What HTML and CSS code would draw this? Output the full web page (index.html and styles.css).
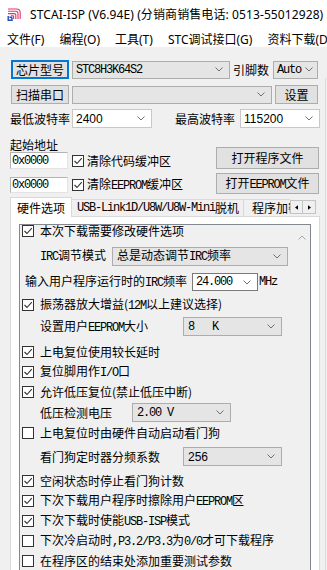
FILE: index.html
```html
<!DOCTYPE html>
<html lang="zh">
<head>
    <meta charset="UTF-8">
    <meta name="viewport" content="width=device-width, initial-scale=1.0">
    <title>STCAI-ISP (V6.94E)</title>
    <link rel="stylesheet" href="styles.css">
</head>
<body>
    <div class="titlebar">
        <svg class="app-icon" viewBox="0 0 14 13">
            <g fill="none" stroke="#e8336b" stroke-width="1.1">
                <path d="M1 1H9.5Q13.2 1 13.2 4.7V11"/>
                <path d="M1 3.3H8.6Q11 3.3 11 5.7V11"/>
                <path d="M1 5.6H7.4Q8.8 5.6 8.8 7V11"/>
                <path d="M4 7.9H6Q6.6 7.9 6.6 8.5V11"/>
            </g>
            <path d="M1.2 8V12.2H5V10.4Q5 9.3 3.9 9.3H2.4" fill="none" stroke="#1f4fbf" stroke-width="1.4"/>
        </svg>
        <span class="title">STCAI-ISP (V6.94E) (分销商销售电话: 0513-55012928)</span>
    </div>

    <div class="menubar">
        <span>文件(F)</span>
        <span>编程(O)</span>
        <span>工具(T)</span>
        <span>STC调试接口(G)</span>
        <span>资料下载(D)</span>
    </div>

    <div class="workspace">
        <div class="left">
            <!-- 芯片选择 -->
            <div class="row row-top">
                <button class="btn btn-side btn-focus">芯片型号</button>
                <div class="combo combo-chip"><span class="m">STC8H3K64S2</span><svg class="chev" viewBox="0 0 8 5"><path d="M.5 .5 4 4 7.5 .5"/></svg></div>
                <span class="lbl lbl-pins">引脚数</span>
                <div class="combo combo-pins"><span class="m">Auto</span><svg class="chev" viewBox="0 0 8 5"><path d="M.5 .5 4 4 7.5 .5"/></svg></div>
            </div>

            <div class="row row-port">
                <button class="btn btn-side">扫描串口</button>
                <div class="combo combo-port"><span></span><svg class="chev" viewBox="0 0 8 5"><path d="M.5 .5 4 4 7.5 .5"/></svg></div>
                <button class="btn btn-set">设置</button>
            </div>

            <div class="row row-baud">
                <span class="lbl lbl-min">最低波特率</span>
                <div class="combo combo-baud"><span class="s">2400</span><svg class="chev" viewBox="0 0 8 5"><path d="M.5 .5 4 4 7.5 .5"/></svg></div>
                <span class="lbl lbl-max">最高波特率</span>
                <div class="combo combo-baud"><span class="s">115200</span><svg class="chev" viewBox="0 0 8 5"><path d="M.5 .5 4 4 7.5 .5"/></svg></div>
            </div>

            <!-- 起始地址 / 打开文件 -->
            <div class="addr-block">
                <div class="addr-left">
                    <div class="lbl addr-title">起始地址</div>
                    <div class="addr-row">
                        <div class="textbox"><span class="m">0x0000</span></div>
                        <span class="cb checked"><svg viewBox="0 0 10 10"><path d="M1.5 5 4 7.5 8.8 2.2"/></svg></span>
                        <span class="lbl">清除代码缓冲区</span>
                    </div>
                    <div class="addr-row addr-row2">
                        <div class="textbox"><span class="m">0x0000</span></div>
                        <span class="cb checked"><svg viewBox="0 0 10 10"><path d="M1.5 5 4 7.5 8.8 2.2"/></svg></span>
                        <span class="lbl">清除<span class="m">EEPROM</span>缓冲区</span>
                    </div>
                </div>
                <div class="addr-right">
                    <button class="btn btn-file">打开程序文件</button>
                    <button class="btn btn-file btn-file2">打开<span class="m">EEPROM</span>文件</button>
                </div>
            </div>

            <!-- 选项卡 -->
            <div class="tabs">
                <div class="tabstrip">
                    <div class="tab-scroll">
                        <div class="tab active">硬件选项</div>
                        <div class="tab"><span class="m">USB-Link1D/U8W/U8W-Mini</span>脱机</div>
                        <div class="tab tab-more">程序加密后传输</div>
                    </div>
                    <div class="tab-rest">
                        <div class="tab-arrows">
                            <span class="arr"><svg viewBox="0 0 4 6"><path d="M4 0V6L0 3Z"/></svg></span>
                            <span class="arr"><svg viewBox="0 0 4 6"><path d="M0 0V6L4 3Z"/></svg></span>
                        </div>
                    </div>
                </div>

                <div class="tab-panel">
                    <div class="optlist">
                        <div class="opts">
                            <div class="opt opt-first">
                                <span class="cb checked"><svg viewBox="0 0 10 10"><path d="M1.5 5 4 7.5 8.8 2.2"/></svg></span>
                                <span class="lbl">本次下载需要修改硬件选项</span>
                            </div>
                            <div class="opt sub mt9">
                                <span class="lbl w72"><span class="m">IRC</span>调节模式</span>
                                <div class="combo combo-irc"><span>总是动态调节<span class="m">IRC</span>频率</span><svg class="chev" viewBox="0 0 8 5"><path d="M.5 .5 4 4 7.5 .5"/></svg></div>
                            </div>
                            <div class="opt sub-wide mt7 h18">
                                <span class="lbl w167">输入用户程序运行时的<span class="m">IRC</span>频率</span>
                                <div class="combo combo-freq"><span class="m">24.000</span><svg class="chev" viewBox="0 0 8 5"><path d="M.5 .5 4 4 7.5 .5"/></svg></div>
                                <span class="m mhz">MHz</span>
                            </div>
                            <div class="opt mt4">
                                <span class="cb checked"><svg viewBox="0 0 10 10"><path d="M1.5 5 4 7.5 8.8 2.2"/></svg></span>
                                <span class="lbl">振荡器放大增益(<span class="m">12M</span>以上建议选择)</span>
                            </div>
                            <div class="opt sub mt2 h19">
                                <span class="lbl w143">设置用户<span class="m">EEPROM</span>大小</span>
                                <div class="combo combo-sel"><span class="m">8   K</span><svg class="chev" viewBox="0 0 8 5"><path d="M.5 .5 4 4 7.5 .5"/></svg></div>
                            </div>
                            <div class="opt mt6">
                                <span class="cb checked"><svg viewBox="0 0 10 10"><path d="M1.5 5 4 7.5 8.8 2.2"/></svg></span>
                                <span class="lbl">上电复位使用较长延时</span>
                            </div>
                            <div class="opt">
                                <span class="cb checked"><svg viewBox="0 0 10 10"><path d="M1.5 5 4 7.5 8.8 2.2"/></svg></span>
                                <span class="lbl">复位脚用作<span class="m">I/O</span>口</span>
                            </div>
                            <div class="opt">
                                <span class="cb checked"><svg viewBox="0 0 10 10"><path d="M1.5 5 4 7.5 8.8 2.2"/></svg></span>
                                <span class="lbl">允许低压复位(禁止低压中断)</span>
                            </div>
                            <div class="opt sub mt1 h19">
                                <span class="lbl w92">低压检测电压</span>
                                <div class="combo combo-sel"><span class="m">2.00 V</span><svg class="chev" viewBox="0 0 8 5"><path d="M.5 .5 4 4 7.5 .5"/></svg></div>
                            </div>
                            <div class="opt mt1">
                                <span class="cb"></span>
                                <span class="lbl">上电复位时由硬件自动启动看门狗</span>
                            </div>
                            <div class="opt sub mt4 h19">
                                <span class="lbl w143">看门狗定时器分频系数</span>
                                <div class="combo combo-sel"><span class="s">256</span><svg class="chev" viewBox="0 0 8 5"><path d="M.5 .5 4 4 7.5 .5"/></svg></div>
                            </div>
                            <div class="opt mt5">
                                <span class="cb checked"><svg viewBox="0 0 10 10"><path d="M1.5 5 4 7.5 8.8 2.2"/></svg></span>
                                <span class="lbl">空闲状态时停止看门狗计数</span>
                            </div>
                            <div class="opt">
                                <span class="cb checked"><svg viewBox="0 0 10 10"><path d="M1.5 5 4 7.5 8.8 2.2"/></svg></span>
                                <span class="lbl">下次下载用户程序时擦除用户<span class="m">EEPROM</span>区</span>
                            </div>
                            <div class="opt">
                                <span class="cb checked"><svg viewBox="0 0 10 10"><path d="M1.5 5 4 7.5 8.8 2.2"/></svg></span>
                                <span class="lbl">下次下载时使能<span class="m">USB-ISP</span>模式</span>
                            </div>
                            <div class="opt">
                                <span class="cb"></span>
                                <span class="lbl">下次冷启动时<span class="m">,P3.2/P3.3</span>为<span class="m">0/0</span>才可下载程序</span>
                            </div>
                            <div class="opt">
                                <span class="cb"></span>
                                <span class="lbl">在程序区的结束处添加重要测试参数</span>
                            </div>
                        </div>
                        <div class="vscroll">
                            <svg class="up" viewBox="0 0 8 5"><path d="M.5 4.5 4 1 7.5 4.5"/></svg>
                        </div>
                    </div>
                </div>
            </div>
        </div>
        <div class="side"></div>
    </div>
</body>
</html>
```

FILE: styles.css
```css
* {
    box-sizing: border-box;
}
body {
    margin: 0;
    width: 327px;
    height: 570px;
    overflow: hidden;
    background-color: #f0f0f0;
    color: #000;
    font-family: "Noto Sans CJK SC", sans-serif;
    font-size: 12px;
    line-height: 14px;
}
.titlebar {
    height: 29px;
    background-color: #fff;
    display: flex;
    align-items: center;
    padding-left: 7px;
    white-space: nowrap;
    overflow: hidden;
}
.app-icon {
    width: 14px;
    height: 13px;
    margin-right: 9px;
    flex: none;
}
.title {
    font-family: "Noto Sans", "Noto Sans CJK SC", sans-serif;
    font-size: 12px;
    letter-spacing: 0.1px;
}
.menubar {
    height: 18px;
    background-color: #fff;
    display: flex;
    gap: 15px;
    padding: 4px 0 0 7px;
    font-family: "Noto Sans", "Noto Sans CJK SC", sans-serif;
    white-space: nowrap;
    overflow: hidden;
}

/* 半角英文数字, 仿宋体点阵宽度 */
.m {
    font-family: "Liberation Mono", monospace;
    font-size: 12px;
    letter-spacing: -1.2px;
    white-space: pre;
}
.s {
    font-family: "Liberation Sans", sans-serif;
    font-size: 12px;
}

.workspace {
    display: flex;
}
.left {
    width: 325px;
    flex: none;
    padding-top: 13px;
}
.side {
    flex: 1;
    margin-top: 31px;
    height: 500px;
    border-left: 1px solid #dadada;
}

.row {
    display: flex;
    align-items: center;
    height: 19px;
}
.row-port {
    margin-top: 6px;
}
.row-baud {
    margin-top: 5px;
}
.lbl {
    white-space: nowrap;
    flex: none;
}

.btn {
    background-color: #e1e1e1;
    border: 1px solid #adadad;
    font-family: "Noto Sans CJK SC", sans-serif;
    font-size: 12px;
    color: #000;
    padding: 0;
    line-height: 14px;
    flex: none;
}
.btn-focus {
    border: 2px solid #0078d7;
}
.btn-side {
    margin-left: 11px;
    width: 58px;
    height: 19px;
}
.btn-set {
    margin-left: 3px;
    width: 43px;
    height: 19px;
}

.combo {
    display: flex;
    align-items: center;
    justify-content: space-between;
    height: 18px;
    padding: 0 6px 0 3px;
    background-color: #e5e5e5;
    border: 1px solid #adadad;
    white-space: nowrap;
    flex: none;
}
.chev {
    width: 8px;
    height: 5px;
    flex: none;
}
.chev path, .up path {
    fill: none;
    stroke: #707070;
    stroke-width: 1;
}
.combo-chip {
    margin-left: 3px;
    width: 158px;
}
.lbl-pins {
    margin-left: 3px;
    width: 40px;
}
.combo-pins {
    width: 45px;
    padding-right: 4px;
}
.combo-port {
    margin-left: 3px;
    width: 200px;
}
.lbl-min {
    margin-left: 10px;
    width: 62px;
}
.lbl-max {
    margin-left: 23px;
    width: 65px;
}
.combo-baud {
    width: 80px;
    height: 19px;
    background-color: #fff;
    border-color: #c8c8c8;
}

.addr-block {
    display: flex;
    margin-top: 10px;
}
.addr-left {
    padding-left: 10px;
}
.addr-title {
    height: 14px;
}
.addr-row {
    display: flex;
    align-items: center;
    height: 17px;
}
.addr-row2 {
    margin-top: 8px;
    height: 16px;
}
.textbox {
    width: 58px;
    height: 100%;
    background-color: #fff;
    border: 1px solid #b4b4b4;
    border-right-color: #e3e3e3;
    border-bottom-color: #e3e3e3;
    padding-left: 1px;
    display: flex;
    align-items: center;
    margin-right: 4px;
}
.addr-right {
    margin-left: auto;
    margin-right: 6px;
    padding-top: 9px;
    display: flex;
    flex-direction: column;
}
.btn-file {
    width: 103px;
    height: 22px;
}
.btn-file2 {
    margin-top: 4px;
    height: 21px;
}

.cb {
    width: 12px;
    height: 12px;
    border: 1px solid #333;
    background-color: #fff;
    flex: none;
    display: flex;
    margin-right: 3px;
}
.cb svg {
    width: 10px;
    height: 10px;
}
.cb path {
    fill: none;
    stroke: #333;
    stroke-width: 1.1;
}

.tabs {
    margin-top: 3px;
    margin-left: 10px;
    width: 310px;
}
.tabstrip {
    display: flex;
    height: 20px;
}
.tab-scroll {
    width: 280px;
    display: flex;
    align-items: flex-end;
    overflow: hidden;
    flex: none;
}
.tab {
    flex: none;
    height: 18px;
    padding: 0 4px 0 5px;
    border: 1px solid #d9d9d9;
    border-left: none;
    background-color: #f0f0f0;
    white-space: nowrap;
    display: flex;
    align-items: center;
}
.tab.active {
    width: 62px;
    height: 20px;
    padding: 0 0 0 6px;
    border-left: 1px solid #d9d9d9;
    border-bottom: none;
    background-color: #fff;
}
.tab-more {
    padding-left: 8px;
}
.tab-rest {
    flex: 1;
    border-bottom: 1px solid #d9d9d9;
}
.tab-arrows {
    display: flex;
    margin-top: 3px;
    height: 14px;
}
.arr {
    width: 13px;
    height: 14px;
    border: 1px solid #c4c4c4;
    background-color: #f0f0f0;
    display: flex;
    align-items: center;
    justify-content: center;
}
.arr + .arr {
    border-left: none;
}
.arr svg {
    width: 3px;
    height: 5px;
}

.tab-panel {
    height: 360px;
    background-color: #fff;
    border: 1px solid #d9d9d9;
    border-top: none;
    padding: 7px 0 0 8px;
}
.optlist {
    width: 292px;
    height: 360px;
    border: 1px solid #828790;
    background-color: #f0f0f0;
    display: flex;
}
.opts {
    flex: 1;
    padding-left: 2px;
}
.opt {
    display: flex;
    align-items: center;
    height: 20px;
}
.opt .cb {
    margin-right: 6px;
}
.opt-first {
    height: 12px;
}
.sub {
    padding-left: 18px;
}
.sub-wide {
    padding-left: 3px;
}
.h18 {
    height: 18px;
}
.h19 {
    height: 19px;
}
.mt1 { margin-top: 1px; }
.mt2 { margin-top: 2px; }
.mt4 { margin-top: 4px; }
.mt5 { margin-top: 5px; }
.mt6 { margin-top: 6px; }
.mt7 { margin-top: 7px; }
.mt9 { margin-top: 9px; }
.w72 { width: 72px; }
.w92 { width: 92px; }
.w143 { width: 143px; }
.w167 { width: 167px; }

.combo-irc {
    width: 176px;
    height: 19px;
    padding-left: 4px;
}
.combo-freq {
    width: 66px;
    height: 18px;
    background-color: #fff;
    border-color: #7a7a7a;
}
.mhz {
    margin-left: 1px;
}
.combo-sel {
    width: 99px;
    height: 19px;
    padding-left: 4px;
}
.vscroll {
    width: 17px;
    flex: none;
    padding-top: 10px;
    display: flex;
    justify-content: center;
    align-items: flex-start;
}
.up {
    width: 8px;
    height: 5px;
}
.up path {
    stroke: #a6a6a6;
}
```
